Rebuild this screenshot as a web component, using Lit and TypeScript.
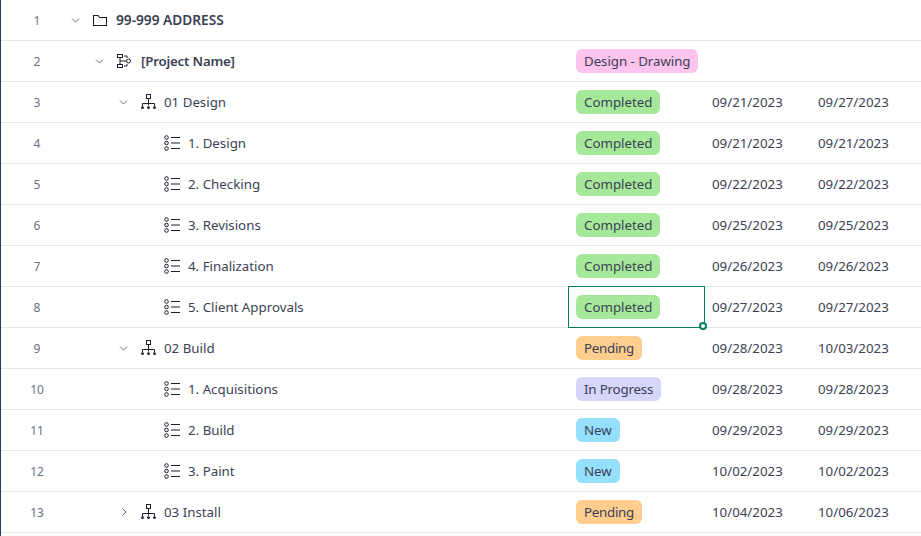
import { LitElement, html, css, svg } from "lit";
import { customElement } from "lit/decorators.js";

type Row = { kind: string; name: string; indent: number; caret?: string; status?: string; tone?: string; a?: string; b?: string; sel?: boolean; bold?: string };

const rows: Row[] = [
  { kind: "folder", name: "99-999 ADDRESS", indent: 0, caret: "down", bold: "caps" },
  { kind: "project", name: "[Project Name]", indent: 1, caret: "down", status: "Design - Drawing", tone: "pink", bold: "semi" },
  { kind: "tree", name: "01 Design", indent: 2, caret: "down", status: "Completed", tone: "green", a: "09/21/2023", b: "09/27/2023" },
  { kind: "list", name: "1. Design", indent: 3, status: "Completed", tone: "green", a: "09/21/2023", b: "09/21/2023" },
  { kind: "list", name: "2. Checking", indent: 3, status: "Completed", tone: "green", a: "09/22/2023", b: "09/22/2023" },
  { kind: "list", name: "3. Revisions", indent: 3, status: "Completed", tone: "green", a: "09/25/2023", b: "09/25/2023" },
  { kind: "list", name: "4. Finalization", indent: 3, status: "Completed", tone: "green", a: "09/26/2023", b: "09/26/2023" },
  { kind: "list", name: "5. Client Approvals", indent: 3, status: "Completed", tone: "green", a: "09/27/2023", b: "09/27/2023", sel: true },
  { kind: "tree", name: "02 Build", indent: 2, caret: "down", status: "Pending", tone: "orange", a: "09/28/2023", b: "10/03/2023" },
  { kind: "list", name: "1. Acquisitions", indent: 3, status: "In Progress", tone: "purple", a: "09/28/2023", b: "09/28/2023" },
  { kind: "list", name: "2. Build", indent: 3, status: "New", tone: "blue", a: "09/29/2023", b: "09/29/2023" },
  { kind: "list", name: "3. Paint", indent: 3, status: "New", tone: "blue", a: "10/02/2023", b: "10/02/2023" },
  { kind: "tree", name: "03 Install", indent: 2, caret: "right", status: "Pending", tone: "orange", a: "10/04/2023", b: "10/06/2023" },
];

const icons: Record<string, unknown> = {
  folder: svg`<path d="M1.5 3.5v10h13v-8H7.5l-1.5-2z" fill="none" stroke="currentColor" stroke-width="1.1"/>`,
  project: svg`<g fill="none" stroke="currentColor" stroke-width="1"><rect x="1.5" y="1.5" width="5" height="3"/><rect x="1.5" y="11.5" width="5" height="3"/><circle cx="12.5" cy="8" r="2"/><path d="M4 4.5v7M4 8h6M8 3h3v2M8 13h3v-2"/></g>`,
  tree: svg`<g fill="none" stroke="currentColor" stroke-width="1"><rect x="6.5" y="0.5" width="4" height="4"/><path d="M8.5 4.5v7M2.5 12V9.5h12V12"/></g><g fill="currentColor"><circle cx="2.5" cy="13.7" r="1.4"/><circle cx="8.5" cy="13.7" r="1.4"/><circle cx="14.5" cy="13.7" r="1.4"/></g>`,
  list: svg`<g fill="none" stroke="currentColor" stroke-width="1"><circle cx="2.5" cy="2.5" r="1.8"/><circle cx="2.5" cy="8" r="1.8"/><circle cx="2.5" cy="13.5" r="1.8"/><path d="M7 2.5h9.5M7 8h9.5M7 13.5h9.5"/></g>`,
};

@customElement("app-root")
export class AppRoot extends LitElement {
  static styles = css`
    :host { display: block; width: 921px; height: 536px; overflow: hidden; background: #fff; font-family: "Noto Sans", "Open Sans", sans-serif; font-size: 13.3px; color: #3b3f54; border-left: 1px solid #2c3e63; box-sizing: border-box; }
    .row { display: grid; grid-template-columns: 567px 137px 106px 1fr; height: 41px; box-sizing: border-box; border-bottom: 1px solid #e3e6ef; align-items: center; }
    .name { display: flex; align-items: center; height: 100%; min-width: 0; }
    .num { width: 70px; padding-left: 2px; text-align: center; box-sizing: border-box; flex: none; font-size: 12px; color: #6b7187; margin-right: -1px; }
    .spacer1 { flex: none; }
    .i0 { width: 0; } .i1 { width: 24px; } .i2 { width: 48px; } .i3 { width: 72px; }
    .caret { width: 11px; height: 16px; flex: none; margin-right: 11px; color: #5b5f70; }
    .ico { width: 16px; height: 16px; flex: none; margin-right: 8px; color: #1b1e2e; display: block; }
    .semi { font-weight: 600; letter-spacing: -0.2px; margin-left: 1px; }
    .caps { font-weight: 600; font-size: 13.7px; padding-bottom: 2px; }
    .cell { height: 100%; display: flex; align-items: center; padding-left: 8px; box-sizing: border-box; position: relative; }
    .sel-box { position: absolute; inset: -1px 0 -1px 0; border: 1px solid #0a7d5f; pointer-events: none; }
    .handle { position: absolute; right: -3px; bottom: -3px; width: 4px; height: 4px; border: 2px solid #0a7d5f; border-radius: 50%; background: #fff; }
    .tag { display: inline-block; height: 24px; line-height: 24px; padding: 0 8px; border-radius: 6px; white-space: nowrap; }
    .pink { background: #fcc4ef; letter-spacing: -0.05px; } .green { background: #a6e89a; } .orange { background: #ffce8f; letter-spacing: -0.25px; } .purple { background: #d6d5fc; letter-spacing: -0.18px; } .blue { background: #93dffc; }
    .date { padding-left: 7px; }
  `;

  private caret(dir?: string) {
    if (!dir) return html`<span class="caret"></span>`;
    return html`<svg class="caret" viewBox="0 0 11 16">${dir === "down"
      ? svg`<path d="M2 6.5l3.5 3.5 3.5-3.5" fill="none" stroke="currentColor" stroke-width="0.9"/>`
      : svg`<path d="M4.5 4.5l3.5 3.5-3.5 3.5" fill="none" stroke="currentColor" stroke-width="0.9"/>`}</svg>`;
  }

  render() {
    return rows.map((r, i) => html`<div class="row">
      <div class="name">
        <span class="num">${i + 1}</span>
        <span class="spacer1 i${r.indent}"></span>
        ${this.caret(r.caret)}
        <svg class="ico" viewBox="0 0 16 16">${icons[r.kind]}</svg>
        <span class="label ${r.bold ?? ""}">${r.name}</span>
      </div>
      <div class="cell">
        ${r.status ? html`<span class="tag ${r.tone}">${r.status}</span>` : ""}
        ${r.sel ? html`<span class="sel-box"><span class="handle"></span></span>` : ""}
      </div>
      <div class="date">${r.a ?? ""}</div>
      <div class="date">${r.b ?? ""}</div>
    </div>`);
  }
}
